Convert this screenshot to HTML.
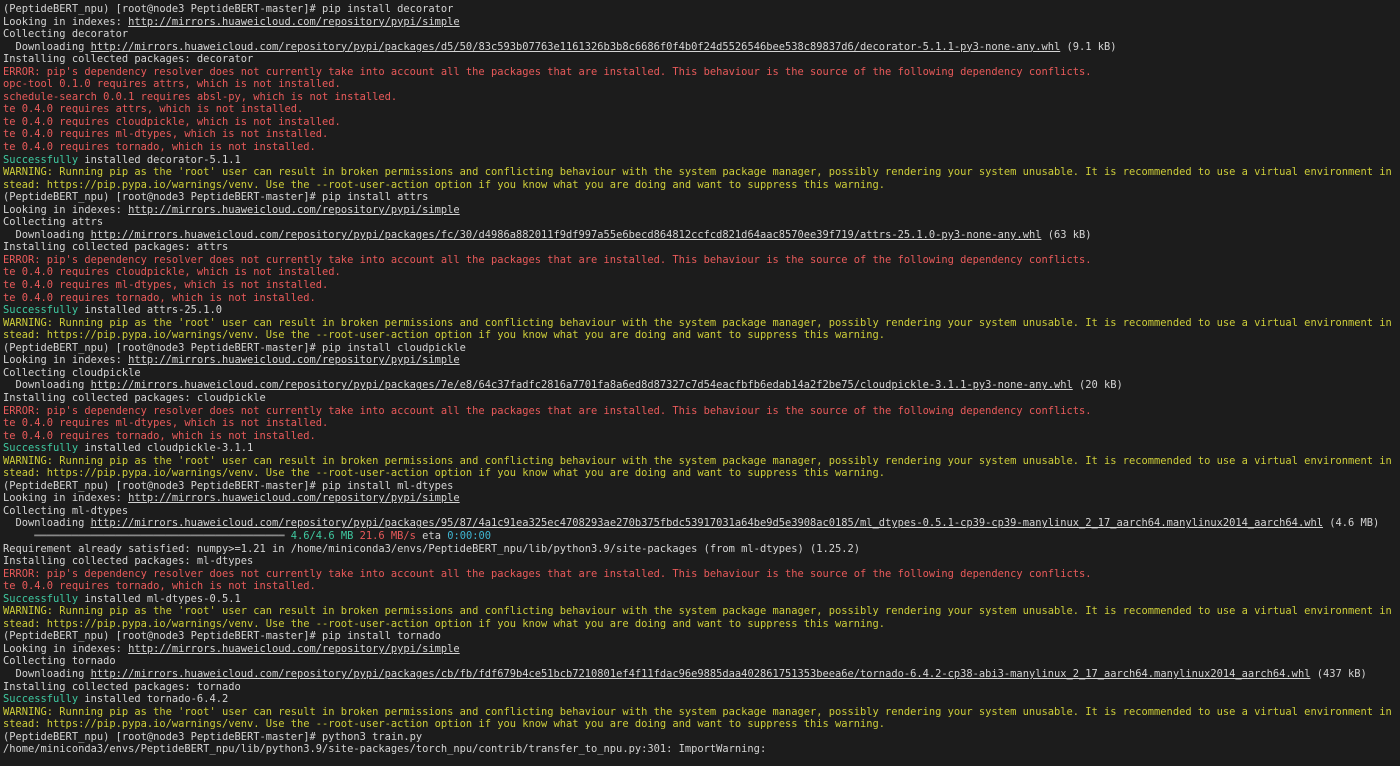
<!DOCTYPE html>
<html><head><meta charset="utf-8"><style>
html,body{margin:0;padding:0;background:#1c1c1c;width:1400px;height:766px;overflow:hidden}
pre{margin:0;padding:3px 0 0 3px;font-family:"DejaVu Sans Mono","Liberation Mono",monospace;font-size:10.4px;line-height:12.54px;color:#d4d4d4;white-space:pre}
.r{color:#e85a5a}.g{color:#3fc9a0}.y{color:#cdcd3a}.u{text-decoration:underline}.c{color:#3fb4d0}.gb{color:#3fc9a0}.bar{color:#888}
</style></head><body><pre>(PeptideBERT_npu) [root@node3 PeptideBERT-master]# pip install decorator
Looking in indexes: <span class="u">http://mirrors.huaweicloud.com/repository/pypi/simple</span>
Collecting decorator
  Downloading <span class="u">http://mirrors.huaweicloud.com/repository/pypi/packages/d5/50/83c593b07763e1161326b3b8c6686f0f4b0f24d5526546bee538c89837d6/decorator-5.1.1-py3-none-any.whl</span> (9.1 kB)
Installing collected packages: decorator
<span class="r">ERROR: pip's dependency resolver does not currently take into account all the packages that are installed. This behaviour is the source of the following dependency conflicts.
opc-tool 0.1.0 requires attrs, which is not installed.
schedule-search 0.0.1 requires absl-py, which is not installed.
te 0.4.0 requires attrs, which is not installed.
te 0.4.0 requires cloudpickle, which is not installed.
te 0.4.0 requires ml-dtypes, which is not installed.
te 0.4.0 requires tornado, which is not installed.</span>
<span class="g">Successfully</span> installed decorator-5.1.1
<span class="y">WARNING: Running pip as the 'root' user can result in broken permissions and conflicting behaviour with the system package manager, possibly rendering your system unusable. It is recommended to use a virtual environment in
stead: https://pip.pypa.io/warnings/venv. Use the --root-user-action option if you know what you are doing and want to suppress this warning.</span>
(PeptideBERT_npu) [root@node3 PeptideBERT-master]# pip install attrs
Looking in indexes: <span class="u">http://mirrors.huaweicloud.com/repository/pypi/simple</span>
Collecting attrs
  Downloading <span class="u">http://mirrors.huaweicloud.com/repository/pypi/packages/fc/30/d4986a882011f9df997a55e6becd864812ccfcd821d64aac8570ee39f719/attrs-25.1.0-py3-none-any.whl</span> (63 kB)
Installing collected packages: attrs
<span class="r">ERROR: pip's dependency resolver does not currently take into account all the packages that are installed. This behaviour is the source of the following dependency conflicts.
te 0.4.0 requires cloudpickle, which is not installed.
te 0.4.0 requires ml-dtypes, which is not installed.
te 0.4.0 requires tornado, which is not installed.</span>
<span class="g">Successfully</span> installed attrs-25.1.0
<span class="y">WARNING: Running pip as the 'root' user can result in broken permissions and conflicting behaviour with the system package manager, possibly rendering your system unusable. It is recommended to use a virtual environment in
stead: https://pip.pypa.io/warnings/venv. Use the --root-user-action option if you know what you are doing and want to suppress this warning.</span>
(PeptideBERT_npu) [root@node3 PeptideBERT-master]# pip install cloudpickle
Looking in indexes: <span class="u">http://mirrors.huaweicloud.com/repository/pypi/simple</span>
Collecting cloudpickle
  Downloading <span class="u">http://mirrors.huaweicloud.com/repository/pypi/packages/7e/e8/64c37fadfc2816a7701fa8a6ed8d87327c7d54eacfbfb6edab14a2f2be75/cloudpickle-3.1.1-py3-none-any.whl</span> (20 kB)
Installing collected packages: cloudpickle
<span class="r">ERROR: pip's dependency resolver does not currently take into account all the packages that are installed. This behaviour is the source of the following dependency conflicts.
te 0.4.0 requires ml-dtypes, which is not installed.
te 0.4.0 requires tornado, which is not installed.</span>
<span class="g">Successfully</span> installed cloudpickle-3.1.1
<span class="y">WARNING: Running pip as the 'root' user can result in broken permissions and conflicting behaviour with the system package manager, possibly rendering your system unusable. It is recommended to use a virtual environment in
stead: https://pip.pypa.io/warnings/venv. Use the --root-user-action option if you know what you are doing and want to suppress this warning.</span>
(PeptideBERT_npu) [root@node3 PeptideBERT-master]# pip install ml-dtypes
Looking in indexes: <span class="u">http://mirrors.huaweicloud.com/repository/pypi/simple</span>
Collecting ml-dtypes
  Downloading <span class="u">http://mirrors.huaweicloud.com/repository/pypi/packages/95/87/4a1c91ea325ec4708293ae270b375fbdc53917031a64be9d5e3908ac0185/ml_dtypes-0.5.1-cp39-cp39-manylinux_2_17_aarch64.manylinux2014_aarch64.whl</span> (4.6 MB)
     <span class="bar">━━━━━━━━━━━━━━━━━━━━━━━━━━━━━━━━━━━━━━━━</span> <span class="gb">4.6/4.6 MB</span> <span class="r">21.6 MB/s</span> eta <span class="c">0:00:00</span>
Requirement already satisfied: numpy&gt;=1.21 in /home/miniconda3/envs/PeptideBERT_npu/lib/python3.9/site-packages (from ml-dtypes) (1.25.2)
Installing collected packages: ml-dtypes
<span class="r">ERROR: pip's dependency resolver does not currently take into account all the packages that are installed. This behaviour is the source of the following dependency conflicts.
te 0.4.0 requires tornado, which is not installed.</span>
<span class="g">Successfully</span> installed ml-dtypes-0.5.1
<span class="y">WARNING: Running pip as the 'root' user can result in broken permissions and conflicting behaviour with the system package manager, possibly rendering your system unusable. It is recommended to use a virtual environment in
stead: https://pip.pypa.io/warnings/venv. Use the --root-user-action option if you know what you are doing and want to suppress this warning.</span>
(PeptideBERT_npu) [root@node3 PeptideBERT-master]# pip install tornado
Looking in indexes: <span class="u">http://mirrors.huaweicloud.com/repository/pypi/simple</span>
Collecting tornado
  Downloading <span class="u">http://mirrors.huaweicloud.com/repository/pypi/packages/cb/fb/fdf679b4ce51bcb7210801ef4f11fdac96e9885daa402861751353beea6e/tornado-6.4.2-cp38-abi3-manylinux_2_17_aarch64.manylinux2014_aarch64.whl</span> (437 kB)
Installing collected packages: tornado
<span class="g">Successfully</span> installed tornado-6.4.2
<span class="y">WARNING: Running pip as the 'root' user can result in broken permissions and conflicting behaviour with the system package manager, possibly rendering your system unusable. It is recommended to use a virtual environment in
stead: https://pip.pypa.io/warnings/venv. Use the --root-user-action option if you know what you are doing and want to suppress this warning.</span>
(PeptideBERT_npu) [root@node3 PeptideBERT-master]# python3 train.py
/home/miniconda3/envs/PeptideBERT_npu/lib/python3.9/site-packages/torch_npu/contrib/transfer_to_npu.py:301: ImportWarning:
</pre></body></html>
